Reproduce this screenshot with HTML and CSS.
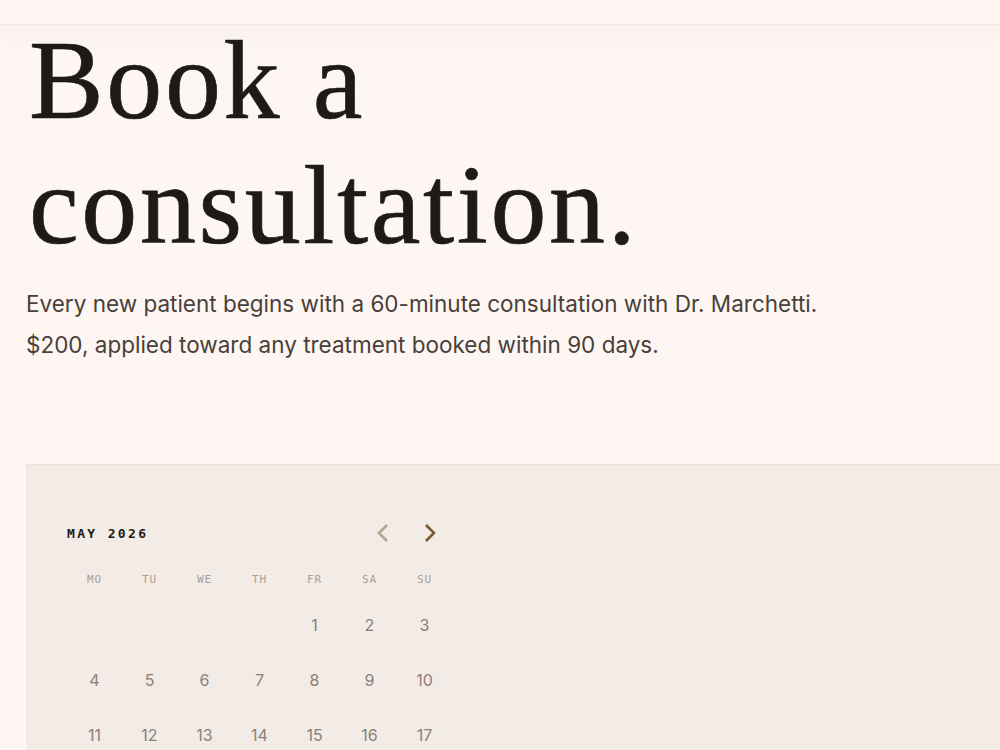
FILE: index.html
```html
<!DOCTYPE html>
<html lang="en">

<head>
    <meta charset="UTF-8">
    <meta name="viewport" content="width=device-width, initial-scale=1.0">
    <title>Book a consultation</title>
    <link rel="stylesheet" href="styles.css">
</head>

<body>
    <header class="topbar"></header>
    <main class="booking">
        <h1 class="title">Book a<br>consultation.</h1>
        <p class="lead">
            Every new patient begins with a 60-minute consultation with Dr. Marchetti.<br>
            $200, applied toward any treatment booked within 90 days.
        </p>

        <section class="planner">
            <div class="calendar">
                <div class="cal-head">
                    <span class="cal-month">May 2026</span>
                    <div class="cal-nav">
                        <button class="cal-btn" disabled aria-label="Previous month">
                            <svg width="14" height="20" viewBox="0 0 14 20"><path d="M11 2 L3 10 L11 18" /></svg>
                        </button>
                        <button class="cal-btn" aria-label="Next month">
                            <svg width="14" height="20" viewBox="0 0 14 20"><path d="M3 2 L11 10 L3 18" /></svg>
                        </button>
                    </div>
                </div>
                <div class="cal-week">
                    <span>Mo</span><span>Tu</span><span>We</span><span>Th</span><span>Fr</span><span>Sa</span><span>Su</span>
                </div>
                <div class="cal-days">
                    <span></span><span></span><span></span><span></span>
                    <span>1</span><span>2</span><span>3</span>
                    <span>4</span><span>5</span><span>6</span><span>7</span><span>8</span><span>9</span><span>10</span>
                    <span>11</span><span>12</span><span>13</span><span>14</span><span>15</span><span>16</span><span>17</span>
                    <span>18</span><span>19</span><span>20</span><span>21</span><span>22</span><span>23</span><span>24</span>
                    <span>25</span><span>26</span><span>27</span><span>28</span><span>29</span><span>30</span><span>31</span>
                </div>
            </div>
        </section>
    </main>
</body>

</html>
```

FILE: styles.css
```css
html,
body {
    margin: 0px;
    background: #fdf6f3;
}

body {
    font-family: Inter, "Noto Sans", sans-serif;
    color: #1e1a17;
    overflow: hidden;
}

.topbar {
    position: fixed;
    top: 0;
    left: 0;
    right: 0;
    height: 24px;
    background: #fdf6f3;
    border-bottom: 1px solid #f1e8e4;
    box-shadow: 0 6px 30px rgba(120, 80, 60, 0.06);
    z-index: 2;
}

.booking {
    padding: 18px 0 0 26px;
}

.title {
    font-family: "Liberation Serif", "Times New Roman", serif;
    font-weight: 400;
    font-size: 112px;
    line-height: 125px;
    letter-spacing: 2.6px;
    -webkit-text-stroke: 0.7px #1e1a17;
    color: #1e1a17;
    margin: 0px 0px 0px 3px;
}

.lead {
    font-size: 22.5px;
    line-height: 41px;
    color: #4a3f39;
    margin: 15px 0 0 0;
}

.planner {
    margin-top: 99px;
    background: #f3ebe6;
    border-top: 1px solid #ebe2dc;
    padding: 40px 40px 40px 41px;
    min-height: 400px;
}

.calendar {
    width: 385px;
}

.cal-head {
    height: 56px;
    display: flex;
    align-items: center;
    justify-content: space-between;
}

.cal-month {
    font-family: "DejaVu Sans Mono", "Liberation Mono", monospace;
    font-weight: 700;
    font-size: 13px;
    letter-spacing: 0.18em;
    text-transform: uppercase;
    color: #1e1a17;
}

.cal-nav {
    display: flex;
    gap: 11px;
    margin-right: 4px;
}

.cal-btn {
    width: 36px;
    height: 36px;
    padding: 0;
    border: 0;
    background: none;
    display: flex;
    align-items: center;
    justify-content: center;
    color: #7a5a32;
    cursor: pointer;
}

.cal-btn:disabled {
    color: #b3a68f;
    cursor: default;
}

.cal-btn path {
    fill: none;
    stroke: currentColor;
    stroke-width: 2.6;
}

.cal-week {
    margin-top: 8px;
    display: grid;
    grid-template-columns: repeat(7, 55px);
    height: 20px;
    align-items: center;
}

.cal-week span {
    text-align: center;
    font-family: "DejaVu Sans Mono", "Liberation Mono", monospace;
    font-size: 11px;
    letter-spacing: 0.08em;
    text-transform: uppercase;
    color: #a99e96;
}

.cal-days {
    margin-top: 8px;
    display: grid;
    grid-template-columns: repeat(7, 55px);
    grid-auto-rows: 55px;
}

.cal-days span {
    display: flex;
    align-items: center;
    justify-content: center;
    font-size: 16px;
    color: #8c8079;
}
```
